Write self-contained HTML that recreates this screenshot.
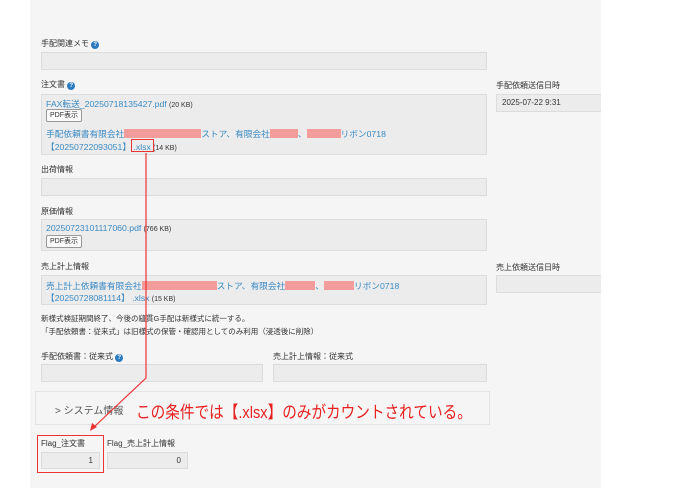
<!DOCTYPE html>
<html><head><meta charset="utf-8"><style>
body{margin:0;width:690px;height:488px;background:#fff;position:relative;overflow:hidden;font-family:"Liberation Sans","Noto Sans CJK JP",sans-serif;font-size:8px;color:#333}
.panel{position:absolute;left:30px;top:0;width:571px;height:488px;background:#f5f5f5}
.a{position:absolute;white-space:nowrap}
.box{position:absolute;background:#ececec;border:1px solid #dcdcdc;box-sizing:border-box}
.lnk{color:#3a8ac4;font-size:8.7px}
.q{display:inline-block;width:8px;height:8px;border-radius:50%;background:#2a7ac0;color:#fff;font-size:6px;text-align:center;line-height:8px;font-weight:bold;vertical-align:0}
.btn{position:absolute;border:1px solid #999;background:#fafafa;border-radius:2px;font-size:7px;line-height:11px;padding:0 3px;box-sizing:border-box;height:13px}
.red{display:inline-block;background:#f29c9c;height:9px;vertical-align:-1px}
</style></head><body>
<div class="panel"></div>
<div class="a" style="left:41px;top:38px">手配関連メモ <span class="q">?</span></div>
<div class="box" style="left:41px;top:52px;width:446px;height:18px"></div>
<div class="a" style="left:41px;top:79px">注文書 <span class="q">?</span></div>
<div class="box" style="left:41px;top:94px;width:446px;height:61px"></div>
<div class="a" style="left:46px;top:97px"><span class="lnk">FAX転送_20250718135427.pdf</span> <span style="font-size:7px">(20 KB)</span></div>
<div class="btn" style="left:46px;top:109px">PDF表示</div>
<div class="a lnk" style="left:46px;top:127px">手配依頼書有限会社<span class="red" style="width:77px"></span>ストア、有限会社<span class="red" style="width:28px"></span>、<span class="red" style="width:34px"></span>リボン0718</div>
<div class="a" style="left:46px;top:140px"><span class="lnk">【20250722093051】 .xlsx</span> <span style="font-size:7px">(14 KB)</span></div>
<div class="a" style="left:131px;top:139px;width:23px;height:13px;border:1px solid #e33;box-sizing:border-box"></div>
<div class="a" style="left:496px;top:80px">手配依頼送信日時</div>
<div class="box" style="left:496px;top:94px;width:105px;height:18px;border-right:none"><span class="a" style="left:5px;top:3px">2025-07-22 9:31</span></div>
<div class="a" style="left:41px;top:164px">出荷情報</div>
<div class="box" style="left:41px;top:178px;width:446px;height:18px"></div>
<div class="a" style="left:41px;top:206px">原価情報</div>
<div class="box" style="left:41px;top:219px;width:446px;height:32px"></div>
<div class="a" style="left:46px;top:223px"><span class="lnk">20250723101117060.pdf</span> <span style="font-size:7px">(766 KB)</span></div>
<div class="btn" style="left:46px;top:235px">PDF表示</div>
<div class="a" style="left:41px;top:261px">売上計上情報</div>
<div class="box" style="left:41px;top:275px;width:446px;height:30px"></div>
<div class="a lnk" style="left:46px;top:279px">売上計上依頼書有限会社<span class="red" style="width:75px"></span>ストア、有限会社<span class="red" style="width:30px"></span>、<span class="red" style="width:30px"></span>リボン0718</div>
<div class="a" style="left:46px;top:291px"><span class="lnk">【20250728081114】 .xlsx</span> <span style="font-size:7px">(15 KB)</span></div>
<div class="a" style="left:496px;top:262px">売上依頼送信日時</div>
<div class="box" style="left:496px;top:275px;width:105px;height:18px;border-right:none"></div>
<div class="a" style="left:41px;top:313px;font-size:7.5px">新様式検証期間終了、今後の縫貫G手配は新様式に統一する。</div>
<div class="a" style="left:41px;top:326px;font-size:7.5px">「手配依頼書：従来式」は旧様式の保管・確認用としてのみ利用（浸透後に削除）</div>
<div class="a" style="left:41px;top:351px">手配依頼書：従来式 <span class="q">?</span></div>
<div class="box" style="left:41px;top:364px;width:222px;height:18px"></div>
<div class="a" style="left:273px;top:351px">売上計上情報：従来式</div>
<div class="box" style="left:273px;top:364px;width:214px;height:18px"></div>
<div class="a" style="left:35px;top:391px;width:455px;height:34px;border:1px solid #e4e4e4;box-sizing:border-box"></div>
<div class="a" style="left:55px;top:402px;font-size:10px;color:#555">&gt; システム情報</div>
<div class="a" style="left:136px;top:398px;font-size:17px;color:#e82020;transform:scaleX(0.86);transform-origin:0 0">この条件では【.xlsx】のみがカウントされている。</div>
<div class="a" style="left:41px;top:438px">Flag_注文書</div>
<div class="box" style="left:41px;top:452px;width:59px;height:17px"><span class="a" style="right:6px;top:3px">1</span></div>
<div class="a" style="left:107px;top:438px">Flag_売上計上情報</div>
<div class="box" style="left:107px;top:452px;width:81px;height:17px"><span class="a" style="right:6px;top:3px">0</span></div>
<div class="a" style="left:37px;top:435px;width:67px;height:38px;border:1px solid #e33;box-sizing:border-box"></div>
<svg class="a" style="left:0;top:0" width="690" height="488"><polyline points="146,153 146,378 93,428" fill="none" stroke="#e33" stroke-width="1.2"/><polygon points="90,431 92,423 97,427" fill="#e33"/></svg>
</body></html>
